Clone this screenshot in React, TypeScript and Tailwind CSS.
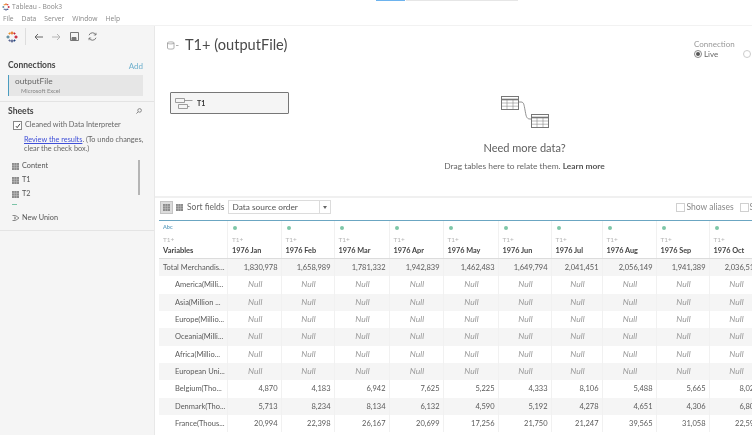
const COLS = ['1976 Jan', '1976 Feb', '1976 Mar', '1976 Apr', '1976 May', '1976 Jun', '1976 Jul', '1976 Aug', '1976 Sep', '1976 Oct'];
const GRID = 'grid grid-cols-[69px_53.5px_53px_55px_54px_55px_53px_51px_54px_53px_53px]';

const N = Array(10).fill(null) as (string | null)[];
const ROWS: { label: string; sub: boolean; vals: (string | null)[] }[] = [
  { label: 'Total Merchandis...', sub: false, vals: ['1,830,978', '1,658,989', '1,781,332', '1,942,839', '1,462,483', '1,649,794', '2,041,451', '2,056,149', '1,941,389', '2,036,512'] },
  { label: 'America(Milli...', sub: true, vals: N },
  { label: 'Asia(Million ...', sub: true, vals: N },
  { label: 'Europe(Millio...', sub: true, vals: N },
  { label: 'Oceania(Milli...', sub: true, vals: N },
  { label: 'Africa(Millio...', sub: true, vals: N },
  { label: 'European Uni...', sub: true, vals: N },
  { label: 'Belgium(Tho...', sub: true, vals: ['4,870', '4,183', '6,942', '7,625', '5,225', '4,333', '8,106', '5,488', '5,665', '8,021'] },
  { label: 'Denmark(Tho...', sub: true, vals: ['5,713', '8,234', '8,134', '6,132', '4,590', '5,192', '4,278', '4,651', '4,306', '6,804'] },
  { label: 'France(Thous...', sub: true, vals: ['20,994', '22,398', '26,167', '20,699', '17,256', '21,750', '21,247', '39,565', '31,058', '22,593'] },
];

function TableauLogo({ size = 12 }: { size?: number }) {
  return (
    <svg width={size} height={size} viewBox="0 0 12 12" fill="none" strokeWidth="1.3">
      <path d="M6 .5v3M4.5 2h3" stroke="#e8762c" />
      <path d="M6 8.5v3M4.5 10h3" stroke="#5b6591" />
      <path d="M.5 6h3M2 4.5v3" stroke="#59879b" />
      <path d="M8.5 6h3M10 4.5v3" stroke="#c72035" />
      <path d="M2.5 2.5h2M3.5 1.5v2" stroke="#eb9129" strokeWidth="1" />
      <path d="M7.5 2.5h2M8.5 1.5v2" stroke="#c72035" strokeWidth="1" />
      <path d="M2.5 9.5h2M3.5 8.5v2" stroke="#5c6692" strokeWidth="1" />
      <path d="M7.5 9.5h2M8.5 8.5v2" stroke="#1f447d" strokeWidth="1" />
    </svg>
  );
}

function GridGlyph({ className = '' }: { className?: string }) {
  return (
    <svg className={`shrink-0 ${className}`} width="7" height="7" viewBox="0 0 7 7">
      <rect width="7" height="7" fill="#8a8a8a" />
      <path d="M0 2.3h7M0 4.6h7M2.3 0v7M4.6 0v7" stroke="#c8c8c8" strokeWidth=".5" />
    </svg>
  );
}

function MiniTable({ x, y }: { x: number; y: number }) {
  return (
    <g transform={`translate(${x} ${y})`} stroke="#777" fill="none">
      <rect x=".5" y=".5" width="17" height="13" fill="#fff" />
      <path d="M.5 3.5h17" strokeWidth="1.6" />
      <path d="M.5 7h17M.5 10.2h17M6 3.5v10M12 3.5v10" strokeWidth=".5" />
    </g>
  );
}

function Cell({ v }: { v: string | null }) {
  if (v === null) {
    return <div className="pl-[2px] text-center italic text-[8.5px] text-[#9a9a9a] border-r border-[#f1f1f1] leading-[17.33px]">Null</div>;
  }
  return <div className="pr-[3px] text-right text-[7.5px] text-[#5a5a5a] border-r border-[#f1f1f1] leading-[17.33px] whitespace-nowrap">{v}</div>;
}

function Sidebar() {
  return (
    <aside className="w-[155px] shrink-0 bg-[#f5f5f5] border-r border-[#e8e8e8] flex flex-col relative">
      <div className="h-[21px] flex items-center pl-[6px] text-[#777]">
        <TableauLogo />
        <div className="w-px h-[17px] bg-[#dddddd] ml-[7px] mr-[8px]" />
        <svg width="9" height="8" viewBox="0 0 9 8" fill="none" stroke="#666" strokeWidth="1"><path d="M9 4H1M4 1 1 4l3 3" /></svg>
        <svg className="ml-[9px]" width="9" height="8" viewBox="0 0 9 8" fill="none" stroke="#b5b5b5" strokeWidth="1"><path d="M0 4h8M5 1l3 3-3 3" /></svg>
        <svg className="ml-[9px]" width="9" height="9" viewBox="0 0 9 9" fill="none" stroke="#777" strokeWidth="1"><path d="M.5.5h8v8h-8z" /><path d="M2 8.5V5.5h4v3" fill="#777" /></svg>
        <svg className="ml-[9px]" width="9" height="9" viewBox="0 0 9 9" fill="none" stroke="#777" strokeWidth="1"><path d="M1 3.2A3.8 3.8 0 0 1 8 3M8 5.8A3.8 3.8 0 0 1 1 6" /><path d="M8 .8V3H5.8M1 8.2V6h2.2" strokeWidth=".8" /></svg>
      </div>
      <div className="mt-[12px] px-[8px] h-[13px] flex items-center justify-between">
        <span className="font-bold text-[8.5px] text-[#444]">Connections</span>
        <span className="text-[8px] text-[#6fb0cd] mr-[3px]">Add</span>
      </div>
      <div className="mt-[3px] ml-[8px] w-[135px] h-[21px] bg-[#e6e6e6] border-l border-[#4a9cc0] pl-[6px] flex flex-col">
        <span className="text-[8.3px] leading-[11px] text-[#666] mt-[1px]">outputFile</span>
        <span className="text-[5.8px] leading-[8px] text-[#888] pl-[6px]">Microsoft Excel</span>
      </div>
      <div className="mt-[5px] border-t border-[#e3e3e3] px-[8px] pt-[4px] h-[15px] flex items-center justify-between">
        <span className="font-bold text-[8.6px] text-[#444]">Sheets</span>
        <svg className="mr-[4px]" width="6" height="6" viewBox="0 0 6 6" fill="none" stroke="#888"><circle cx="3.6" cy="2.4" r="1.8" /><path d="M2.2 3.8.4 5.6" /></svg>
      </div>
      <div className="mt-[5px] ml-[13px] flex items-center h-[9px]">
        <span className="w-[9px] h-[9px] border border-[#888] bg-white flex items-center justify-center">
          <svg width="6" height="6" viewBox="0 0 6 6" fill="none" stroke="#444"><path d="m1 3.2 1.2 1.5L5 .8" /></svg>
        </span>
        <span className="ml-[3px] text-[7.3px] text-[#666]">Cleaned with Data Interpreter</span>
      </div>
      <p className="mt-[6px] ml-[24px] text-[7.3px] leading-[8.5px] text-[#666] w-[125px]">
        <span className="text-[#3f4fd8] underline">Review the results</span>. (To undo changes, clear the check box.)
      </p>
      <div className="mt-[6px] ml-[12px] flex flex-col">
        {['Content', 'T1', 'T2'].map((s) => (
          <div key={s} className="h-[14px] flex items-center text-[7.3px] text-[#555]">
            <GridGlyph />
            <span className="ml-[3px]">{s}</span>
          </div>
        ))}
        <div className="mt-[3px] w-[5px] h-px bg-[#7cc4a8]" />
        <div className="mt-[6px] h-[14px] flex items-center text-[7.3px] text-[#555]">
          <svg width="8" height="8" viewBox="0 0 8 8" fill="none" stroke="#888"><path d="M.5 1.5h3L7 4 3.5 6.5h-3M2 3.2h2M2 4.8h2" /></svg>
          <span className="ml-[2px]">New Union</span>
        </div>
      </div>
      <div className="mt-[5px] border-t border-[#e4e4e4]" />
      <div className="absolute left-[138px] top-[134px] w-[2px] h-[35px] bg-[#b5b5b5]" />
    </aside>
  );
}

function Canvas() {
  return (
    <section className="h-[170px] shrink-0 flex flex-col">
      <div className="h-[60px] flex justify-between">
        <div className="flex items-center h-[26px] mt-[6px] pl-[12px]">
          <svg width="12" height="9" viewBox="0 0 12 9" fill="none" stroke="#999"><path d="M.5 1.8C.5.6 7 .6 7 1.8v5.4c0 1.2-6.5 1.2-6.5 0zM.5 2c0 1.2 6.5 1.2 6.5 0" strokeWidth=".8" /><path d="M9 4.5h2.5" strokeWidth=".8" /></svg>
          <span className="ml-[6px] text-[14.6px] text-[#4a4a4a]">T1+ (outputFile)</span>
        </div>
        <div className="mt-[13px] w-[58px] shrink-0 text-[8px] leading-[10px]">
          <div className="text-[#999]">Connection</div>
          <div className="flex items-center h-[10px]">
            <span className="w-[8px] h-[8px] rounded-full border border-[#888] flex items-center justify-center"><span className="w-[4px] h-[4px] rounded-full bg-[#555]" /></span>
            <span className="ml-[2px] text-[#666]">Live</span>
            <span className="ml-[25px] w-[8px] h-[8px] rounded-full border border-[#ccc] shrink-0" />
          </div>
        </div>
      </div>
      <div className="flex">
        <div className="ml-[15px] mt-[6px] w-[119px] h-[22px] border border-[#777] rounded-[1px] bg-[#f5f5f5] flex items-center pl-[4px]">
          <svg width="18" height="11" viewBox="0 0 18 11" fill="none" stroke="#888" strokeWidth=".8"><path d="M.5.5h9v4h-9zM3.5 6.5h9v4h-9zM9.5 2.5h8M12.5 8.5h2" /></svg>
          <span className="ml-[4px] text-[7px] font-bold text-[#333]">T1</span>
        </div>
        <div className="ml-[154px] mt-[10px] w-[163px] flex flex-col items-center">
          <svg width="48" height="32" viewBox="0 0 48 32" fill="none">
            <path d="M18 6h2c3 0 3 3 4 8s1 9 5 9h1" stroke="#777" strokeWidth=".8" />
            <MiniTable x={0} y={0} />
            <MiniTable x={30} y={18} />
          </svg>
          <div className="mt-[13px] text-[11px] leading-[14px] text-[#5e5e5e] whitespace-nowrap">Need more data?</div>
          <div className="mt-[5px] text-[8.4px] leading-[12px] text-[#666] whitespace-nowrap">
            Drag tables here to relate them. <span className="font-bold text-[#555]">Learn more</span>
          </div>
        </div>
      </div>
    </section>
  );
}

function Toolbar() {
  return (
    <div className="h-[24px] shrink-0 border-t-2 border-[#f0f0f0] flex items-center pl-[5px] pb-[4px]">
      <span className="w-[13px] h-[13px] shrink-0 bg-[#dcdcdc] border border-[#c4c4c4] flex items-center justify-center"><GridGlyph /></span>
      <GridGlyph className="ml-[3px]" />
      <span className="ml-[4px] text-[8.5px] text-[#666] whitespace-nowrap shrink-0">Sort fields</span>
      <div className="ml-[3px] w-[103px] h-[14px] shrink-0 bg-white border border-[#dcdcdc] flex items-center justify-between">
        <span className="pl-[4px] text-[8.3px] text-[#555] whitespace-nowrap">Data source order</span>
        <span className="w-[11px] h-full border-l border-[#dcdcdc] flex items-center justify-center">
          <svg width="4" height="3" viewBox="0 0 4 3" fill="#666"><path d="M0 0h4L2 3z" /></svg>
        </span>
      </div>
      <span className="ml-[345px] w-[9px] h-[9px] border border-[#d0d0d0] shrink-0" />
      <span className="ml-[2px] text-[8.5px] text-[#888] whitespace-nowrap">Show aliases</span>
      <span className="ml-[6px] w-[9px] h-[9px] border border-[#d0d0d0] shrink-0" />
      <span className="ml-px text-[8.5px] text-[#888]">S</span>
    </div>
  );
}

function DataGrid() {
  return (
    <div className="ml-[4px] w-[640px]">
      <div className={`${GRID} h-[39px] border-t border-[#6ba6c2] border-b border-b-[#dcdcdc] w-[640px]`}>
        <div className="pl-[4px] border-r border-[#f1f1f1] flex flex-col">
          <span className="mt-[2px] h-[9px] text-[5.5px] leading-[9px] font-bold text-[#6aa5c4]">Abc</span>
          <span className="mt-[3px] text-[6.5px] leading-[9px] text-[#b5b5b5]">T1+</span>
          <span className="mt-[1px] text-[7.5px] leading-[12px] font-bold text-[#444]">Variables</span>
        </div>
        {COLS.map((c) => (
          <div key={c} className="pl-[4px] border-r border-[#f1f1f1] flex flex-col overflow-hidden">
            <span className="mt-[2px] h-[9px] flex items-center"><span className="ml-px w-[4px] h-[4px] rounded-full bg-[#7fc7a8]" /></span>
            <span className="mt-[3px] text-[6.5px] leading-[9px] text-[#b5b5b5]">T1+</span>
            <span className="mt-[1px] text-[7.3px] leading-[12px] font-bold text-[#444] whitespace-nowrap">{c}</span>
          </div>
        ))}
        <div />
      </div>
      {ROWS.map((r, i) => (
        <div key={r.label} className={`${GRID} h-[17.33px] ${i % 2 === 0 ? 'bg-[#f5f5f5]' : 'bg-white'}`}>
          <div className={`${r.sub ? 'pl-[16px]' : 'pl-[4px]'} text-[7.5px] text-[#5a5a5a] leading-[17.33px] whitespace-nowrap overflow-hidden border-r border-[#f1f1f1]`}>{r.label}</div>
          {r.vals.map((v, j) => <Cell key={j} v={v} />)}
          <div />
        </div>
      ))}
    </div>
  );
}

export default function App() {
  return (
    <div className="w-[752px] h-[435px] overflow-hidden bg-white flex flex-col font-['Lato',sans-serif] blur-[0.35px]">
      <div className="h-px flex pl-[376px] shrink-0">
        <div className="w-[29px] bg-[#6db3ee]" />
        <div className="w-[112px] bg-[#e6e6e6] ml-px" />
      </div>
      <div className="h-[12px] shrink-0 flex items-center pl-[2px] font-['Open_Sans',sans-serif]">
        <TableauLogo size={8} />
        <span className="ml-[2px] text-[6.7px] text-[#888]">Tableau - Book3</span>
      </div>
      <div className="h-[12px] shrink-0 flex items-center gap-[8px] pl-[3px] text-[6.7px] text-[#888] font-['Open_Sans',sans-serif]">
        {['File', 'Data', 'Server', 'Window', 'Help'].map((m) => <span key={m}>{m}</span>)}
      </div>
      <div className="flex-1 flex min-h-0 border-t border-[#f2f2f2]">
        <Sidebar />
        <main className="flex-1 min-w-0 flex flex-col overflow-hidden">
          <Canvas />
          <Toolbar />
          <DataGrid />
        </main>
      </div>
    </div>
  );
}
